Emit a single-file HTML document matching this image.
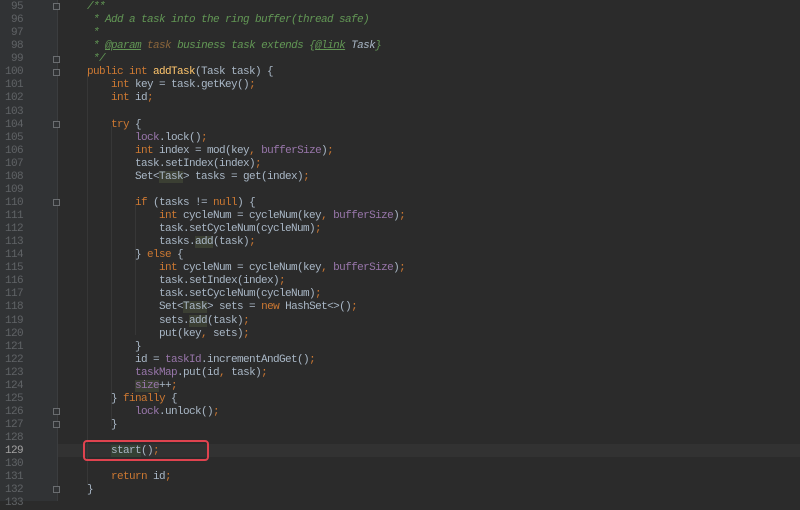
<!DOCTYPE html>
<html><head><meta charset="utf-8"><style>
html,body{margin:0;padding:0;width:800px;height:501px;overflow:hidden;background:#2b2b2b}
#g{position:absolute;left:0;top:0;width:57px;height:501px;background:#313335}
#fold{position:absolute;left:57px;top:0;width:1px;height:501px;background:#3b3d3f}
.ln{position:absolute;left:0;width:23px;text-align:right;font:11px/13.07px "Liberation Mono",monospace;letter-spacing:-0.6px;color:#606366;white-space:pre}
.code{position:absolute;left:87px;font:11px/13.07px "Liberation Mono",monospace;letter-spacing:-0.6px;color:#a9b7c6;white-space:pre}
.k{color:#cc7832}.f{color:#9876aa}.m{color:#ffc66d}.c{color:#629755;font-style:italic}.t{color:#8a653b;font-style:italic}
.u{text-decoration:underline}.h{background:#3b3f33}
.cur{position:absolute;left:58px;top:444px;width:742px;height:13px;background:#323232}
.box{position:absolute;left:83px;top:440px;width:122px;height:17px;border:2px solid #e0434f;border-radius:4px}
.fm{position:absolute;left:53px;width:7px;height:7px;border:1px solid #6a6d70;background:#313335;box-sizing:border-box}
.ig{position:absolute;width:1px;background:#373737}
</style></head><body>
<div id="g"></div><div id="fold"></div>
<div class="cur"></div>
<div class="ig" style="left:87px;top:74px;height:410px"></div>
<div class="ig" style="left:111px;top:126px;height:300px"></div>
<div class="ig" style="left:135px;top:205px;height:130px"></div>
<div class="fm" style="top:3px"></div>
<div class="fm" style="top:56px"></div>
<div class="fm" style="top:69px"></div>
<div class="fm" style="top:121px"></div>
<div class="fm" style="top:199px"></div>
<div class="fm" style="top:408px"></div>
<div class="fm" style="top:421px"></div>
<div class="fm" style="top:486px"></div>
<div class="ln" style="top:1px">95
96
97
98
99
100
101
102
103
104
105
106
107
108
109
110
111
112
113
114
115
116
117
118
119
120
121
122
123
124
125
126
127
128
<span style="color:#a4a3a3">129</span>
130
131
132
133</div>
<div class="code" style="top:1px"><span class="c">/**
 * Add a task into the ring buffer(thread safe)
 *
 * <b class="u" style="font-weight:normal">@param</b> <span class="t">task</span> business task extends {<span class="u">@link</span> <span style="color:#a9b7c6">Task</span>}
 */</span>
<span class="k">public int </span><span class="m">addTask</span>(Task task) {
    <span class="k">int </span>key = task.getKey()<span class="k">;</span>
    <span class="k">int </span>id<span class="k">;</span>

    <span class="k">try </span>{
        <span class="f">lock</span>.lock()<span class="k">;</span>
        <span class="k">int </span>index = mod(key<span class="k">, </span><span class="f">bufferSize</span>)<span class="k">;</span>
        task.setIndex(index)<span class="k">;</span>
        Set&lt;<span class="h">Task</span>&gt; tasks = get(index)<span class="k">;</span>

        <span class="k">if </span>(tasks != <span class="k">null</span>) {
            <span class="k">int </span>cycleNum = cycleNum(key<span class="k">, </span><span class="f">bufferSize</span>)<span class="k">;</span>
            task.setCycleNum(cycleNum)<span class="k">;</span>
            tasks.<span class="h">add</span>(task)<span class="k">;</span>
        } <span class="k">else </span>{
            <span class="k">int </span>cycleNum = cycleNum(key<span class="k">, </span><span class="f">bufferSize</span>)<span class="k">;</span>
            task.setIndex(index)<span class="k">;</span>
            task.setCycleNum(cycleNum)<span class="k">;</span>
            Set&lt;<span class="h">Task</span>&gt; sets = <span class="k">new </span>HashSet&lt;&gt;()<span class="k">;</span>
            sets.<span class="h">add</span>(task)<span class="k">;</span>
            put(key<span class="k">, </span>sets)<span class="k">;</span>
        }
        id = <span class="f">taskId</span>.incrementAndGet()<span class="k">;</span>
        <span class="f">taskMap</span>.put(id<span class="k">, </span>task)<span class="k">;</span>
        <span class="f h">size</span>++<span class="k">;</span>
    } <span class="k">finally </span>{
        <span class="f">lock</span>.unlock()<span class="k">;</span>
    }

    <span style="background:#344134">start</span>()<span class="k">;</span>

    <span class="k">return </span>id<span class="k">;</span>
}</div>
<div class="box"></div>
</body></html>
